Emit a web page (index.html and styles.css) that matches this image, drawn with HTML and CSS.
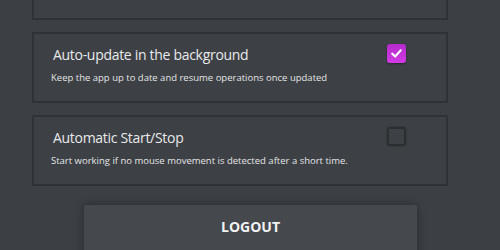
FILE: index.html
```html
<!DOCTYPE html>
<html>
<head>
<meta charset="utf-8">
<link rel="stylesheet" href="styles.css">
</head>
<body>
<div class="page">
  <div class="settings">
    <div class="card">
      <div class="row">
        <div class="title">Launch on startup</div>
        <span class="check"></span>
      </div>
      <div class="desc">Start the app automatically when your computer starts</div>
    </div>
    <div class="card">
      <div class="row">
        <div class="title">Auto-update in the background</div>
        <span class="check checked">
          <svg viewBox="0 0 20 20" width="19" height="19"><path d="M5.5 10.2 L8.6 13.2 L14.5 6.6" fill="none" stroke="#fff" stroke-width="2.2" stroke-linecap="round" stroke-linejoin="round"/></svg>
        </span>
      </div>
      <div class="desc">Keep the app up to date and resume operations once updated</div>
    </div>
    <div class="card">
      <div class="row">
        <div class="title">Automatic Start/Stop</div>
        <span class="check"></span>
      </div>
      <div class="desc">Start working if no mouse movement is detected after a short time.</div>
    </div>
  </div>
  <button class="logout">LOGOUT</button>
</div>
</body>
</html>
```
FILE: styles.css
```css
html, body {
  margin: 0;
  padding: 0;
  background: #3c3f44;
  height: 100%;
  overflow: hidden;
}
.page {
  font-family: "Open Sans", "Noto Sans", sans-serif;
  color: #e9eaeb;
  display: flex;
  flex-direction: column;
  align-items: center;
  margin-top: -51px;
}
.settings {
  display: flex;
  flex-direction: column;
  gap: 12px;
  width: 416px;
  margin-left: -20px;
}
.card {
  box-sizing: border-box;
  height: 71px;
  border: 2px solid #2f3236;
  background: #3d4045;
  padding: 9px 0 0 19px;
}
.row {
  display: flex;
  justify-content: space-between;
  align-items: flex-start;
  padding-right: 40px;
}
.title {
  font-size: 14px;
  line-height: 20px;
  padding-top: 2px;
  letter-spacing: -0.3px;
}
.check {
  box-sizing: border-box;
  width: 19px;
  height: 19px;
  border-radius: 3px;
  border: 2px solid #2c2e32;
  margin-top: 1px;
  box-shadow: 0 0 2px rgba(0,0,0,0.35);
  display: flex;
}
.check.checked {
  border: none;
  background: linear-gradient(#b52acb, #d23be6);
  box-shadow: 0 1px 2px rgba(0,0,0,0.4);
}
.desc {
  font-size: 9.5px;
  line-height: 12px;
  margin-top: 7px;
  margin-left: -2px;
  color: #e4e5e6;
}
.logout {
  margin-top: 19px;
  width: 333px;
  height: 60px;
  border: none;
  border-radius: 2px;
  background: #45484d;
  box-shadow: 0 0 8px rgba(0,0,0,0.35);
  color: #f1f2f3;
  font-family: "Open Sans", "Noto Sans", sans-serif;
  font-weight: 700;
  font-size: 14px;
  padding: 12px 0 0;
  text-align: center;
  align-self: center;
  display: flex;
  justify-content: center;
  align-items: flex-start;
  margin-left: 1px;
}
```
